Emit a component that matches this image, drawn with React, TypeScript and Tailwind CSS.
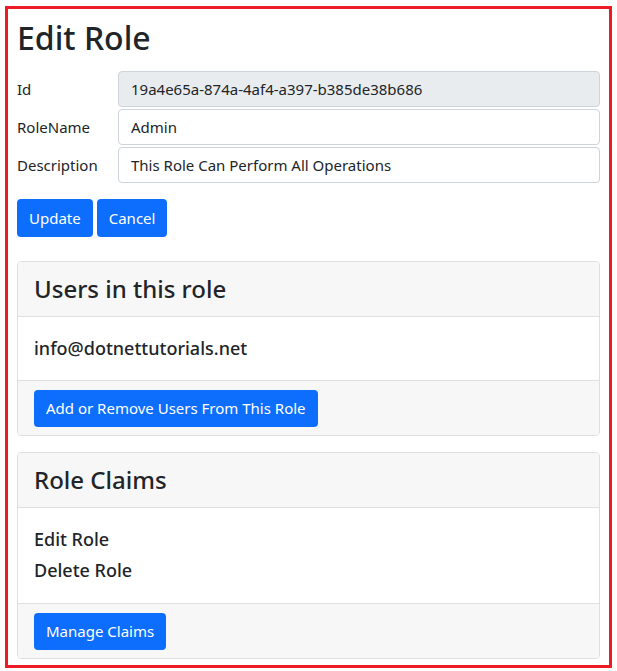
import React from 'react';

const font = { fontFamily: '"Noto Sans", "Open Sans", sans-serif' };

export default function App() {
  const rows = [
    { label: 'Id', value: '19a4e65a-874a-4af4-a397-b385de38b686', readOnly: true },
    { label: 'RoleName', value: 'Admin', readOnly: false },
    { label: 'Description', value: 'This Role Can Perform All Operations', readOnly: false },
  ];

  return (
    <div className="w-[617px] h-[671px] bg-white pt-[6px] pl-[5px]" style={font}>
      <div className="w-[607px] h-[662px] border-[3px] border-[#ed1c24] px-[9px] text-[#212529]">
        <h1 className="text-[32px] font-medium leading-[38px] mt-[10px] mb-[14px]">Edit Role</h1>

        <div className="flex flex-col gap-[2px]">
          {rows.map(r => (
            <div key={r.label} className="flex items-center">
              <label className="w-[101px] text-[15px]">{r.label}</label>
              <input
                readOnly
                value={r.value}
                className={`flex-1 h-[36px] px-[12px] text-[15px] border border-[#ced4da] rounded-[4px] outline-none ${
                  r.readOnly ? 'bg-[#e9ecef]' : 'bg-white'
                }`}
              />
            </div>
          ))}
        </div>

        <div className="flex gap-[4px] mt-[16px]">
          <button className="h-[38px] px-[12px] text-[15px] text-white bg-[#0d6efd] rounded-[4px]">Update</button>
          <button className="h-[38px] px-[12px] text-[15px] text-white bg-[#0d6efd] rounded-[4px]">Cancel</button>
        </div>

        <div className="mt-[24px] border border-[#dfdfdf] rounded-[4px] overflow-hidden">
          <div className="h-[55px] bg-[#f7f7f7] border-b border-[#dfdfdf] px-[16px] flex items-center text-[24px] font-medium">
            Users in this role
          </div>
          <div className="h-[63px] px-[16px] flex items-center text-[18px] font-medium">info@dotnettutorials.net</div>
          <div className="h-[55px] bg-[#f7f7f7] border-t border-[#dfdfdf] px-[16px] flex items-center">
            <button className="h-[37px] px-[12px] text-[15px] text-white bg-[#0d6efd] rounded-[4px]">
              Add or Remove Users From This Role
            </button>
          </div>
        </div>

        <div className="mt-[16px] border border-[#dfdfdf] rounded-[4px] overflow-hidden">
          <div className="h-[55px] bg-[#f7f7f7] border-b border-[#dfdfdf] px-[16px] flex items-center text-[24px] font-medium">
            Role Claims
          </div>
          <div className="h-[95px] px-[16px] pt-[16px] text-[18px] font-medium leading-[31px]">
            <div>Edit Role</div>
            <div>Delete Role</div>
          </div>
          <div className="h-[55px] bg-[#f7f7f7] border-t border-[#dfdfdf] px-[16px] flex items-center">
            <button className="h-[37px] px-[12px] text-[15px] text-white bg-[#0d6efd] rounded-[4px]">Manage Claims</button>
          </div>
        </div>
      </div>
    </div>
  );
}
